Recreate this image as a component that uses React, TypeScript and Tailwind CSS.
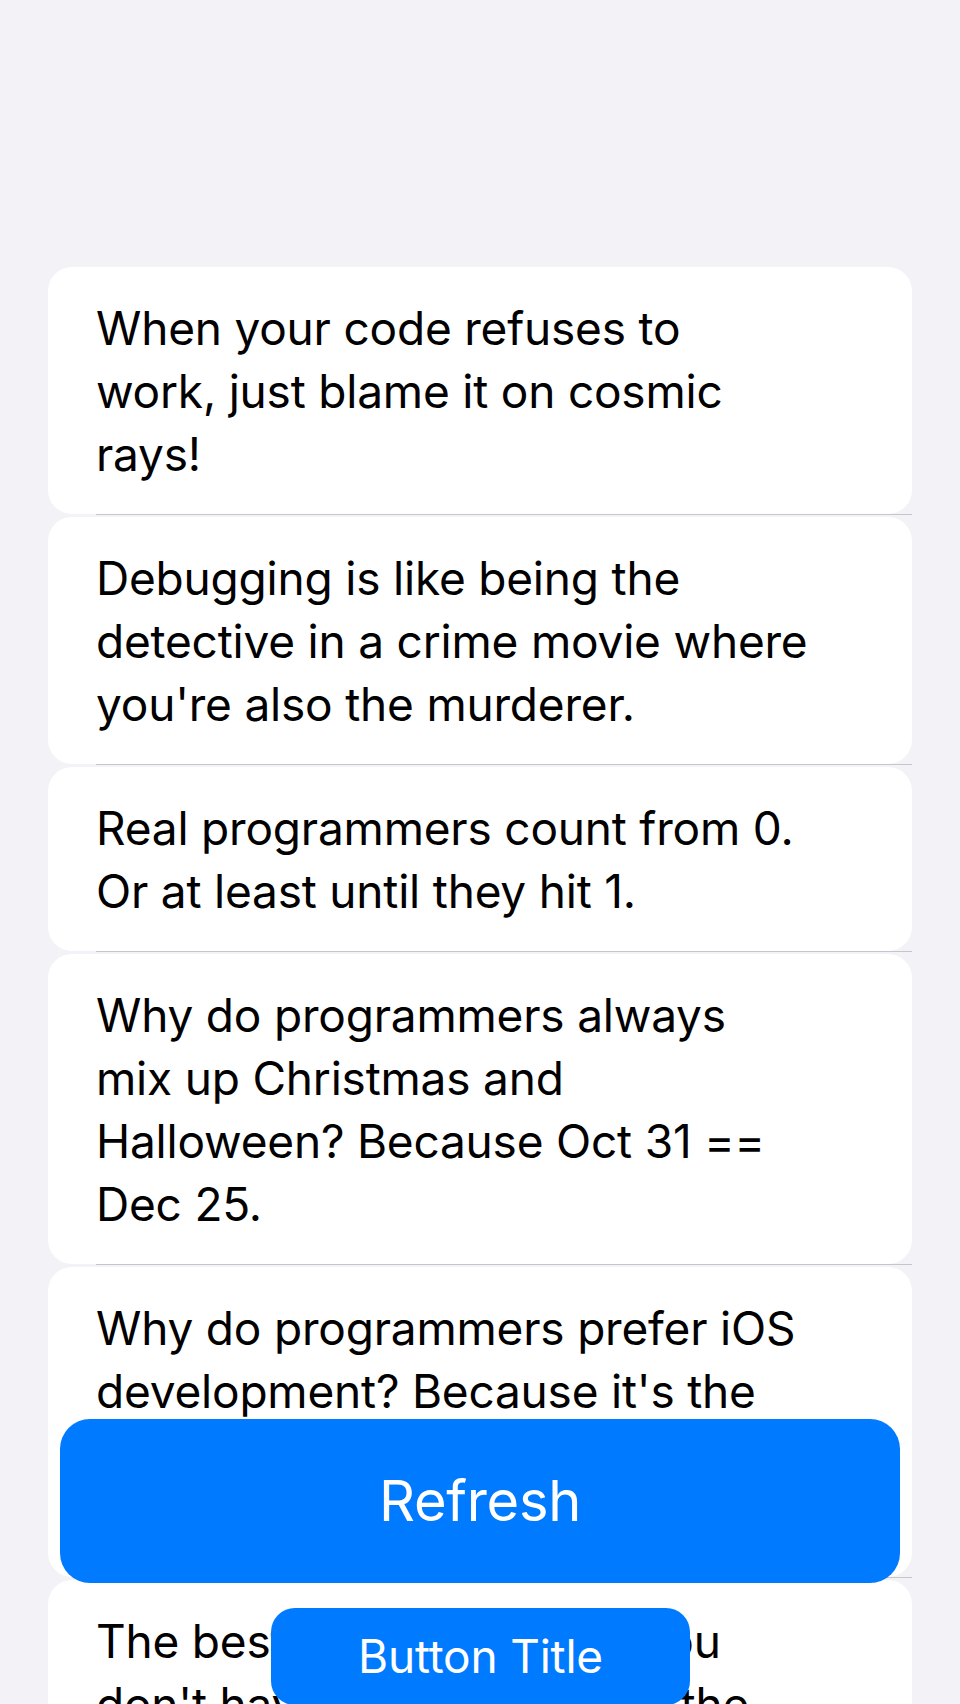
const jokes: string[][] = [
  ["When your code refuses to", "work, just blame it on cosmic", "rays!"],
  ["Debugging is like being the", "detective in a crime movie where", "you're also the murderer."],
  ["Real programmers count from 0.", "Or at least until they hit 1."],
  [
    "Why do programmers always",
    "mix up Christmas and",
    "Halloween? Because Oct 31 ==",
    "Dec 25.",
  ],
  [
    "Why do programmers prefer iOS",
    "development? Because it's the",
    "only place where they can",
    "Swift-ly fix their bugs!",
  ],
  ["The best code is the one you", "don't have to write. That is the", "real secret."],
];

function JokeRow({ lines }: { lines: string[] }) {
  return (
    <div className="flex flex-col">
      <div className="rounded-[24px] bg-white pl-12 pr-12 pt-[30px] pb-[28px] text-[46px] leading-[63px] tracking-[-0.2px] text-black">
        {lines.map((line, i) => (
          <div key={i} className="whitespace-nowrap">
            {line}
          </div>
        ))}
      </div>
      <div className="ml-12 h-px bg-[#c6c6c8]" />
      <div className="h-[2px]" />
    </div>
  );
}

export default function App() {
  return (
    <div className="relative h-[1704px] overflow-hidden bg-[#f2f2f7] font-['Inter',sans-serif]">
      <div className="flex flex-col px-12 pt-[267px]">
        {jokes.map((lines, i) => (
          <JokeRow key={i} lines={lines} />
        ))}
      </div>

      <button className="absolute left-[60px] top-[1419px] flex h-[164px] w-[840px] items-center justify-center rounded-[30px] bg-[#007aff] text-[56px] tracking-[-0.3px] text-white">
        Refresh
      </button>

      <button className="absolute left-[271px] top-[1608px] flex h-[97px] w-[419px] items-center justify-center rounded-[24px] bg-[#007aff] text-[46px] tracking-[-0.2px] text-white">
        Button Title
      </button>
    </div>
  );
}
